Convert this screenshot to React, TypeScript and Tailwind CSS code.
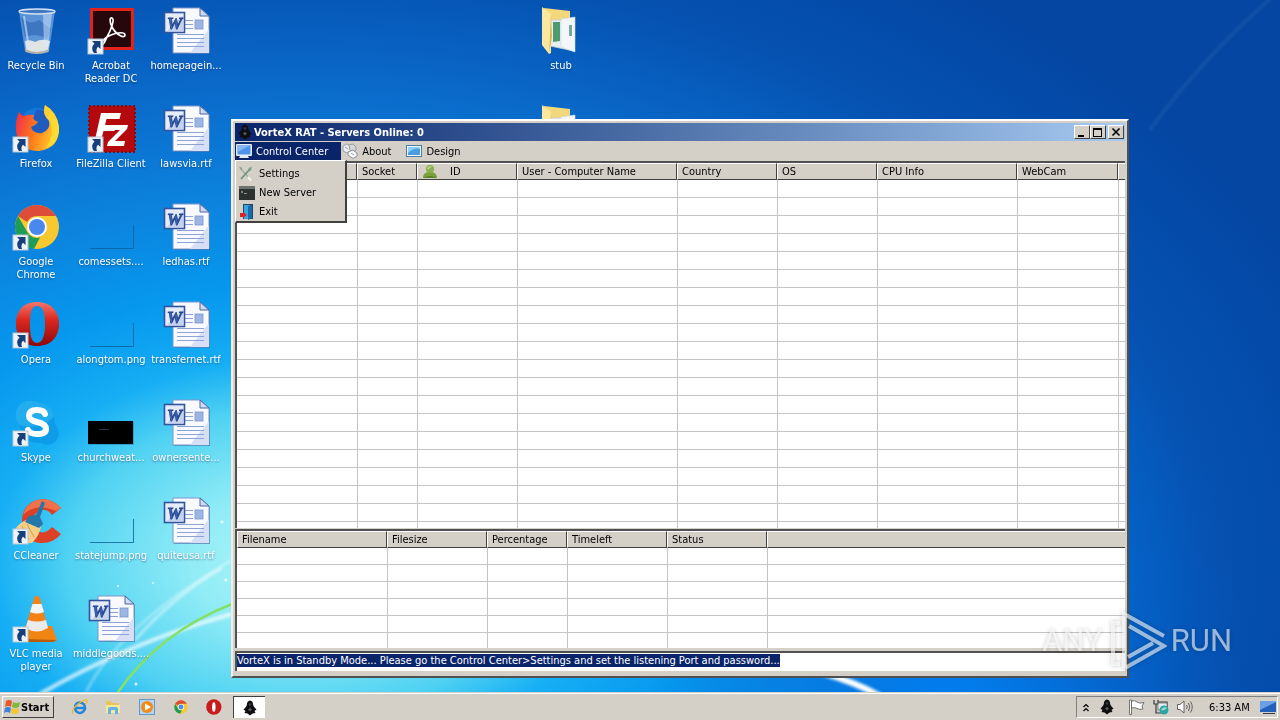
import { useEffect, useRef, type ReactNode } from "react";

const CONNECTION_COLUMNS = [
  { label: "", width: "w-[120px]" },
  { label: "Socket", width: "w-[60px]" },
  { label: "ID", width: "w-[100px]", icon: true },
  { label: "User - Computer Name", width: "w-[160px]" },
  { label: "Country", width: "w-[100px]" },
  { label: "OS", width: "w-[100px]" },
  { label: "CPU Info", width: "w-[140px]" },
  { label: "WebCam", width: "w-[101px]" },
  { label: "", width: "" },
];

const TRANSFER_COLUMNS = [
  { label: "Filename", width: "w-[150px]" },
  { label: "Filesize", width: "w-[100px]" },
  { label: "Percentage", width: "w-[80px]" },
  { label: "Timeleft", width: "w-[100px]" },
  { label: "Status", width: "w-[100px]" },
  { label: "", width: "" },
];

const RAISED = "border border-t-white border-l-white border-r-[#404040] border-b-[#404040] bg-[#d4d0c8]";
const SUNKEN = "border border-t-[#808080] border-l-[#808080] border-r-white border-b-white";

function Shortcut() {
  return (
    <g>
      <rect x="1" y="32" width="15" height="15" fill="#eef3f8" stroke="#b9c6d6" strokeWidth="1" />
      <path d="M5 34H13.500V42L11 39.700Q8.500 42 10 46H7Q3 41 7.500 36.500Z" fill="#163f7c" />
    </g>
  );
}

function Icon48({ children }: { children: ReactNode }) {
  return (
    <svg viewBox="0 0 48 48" className="h-12 w-12 shrink-0 overflow-visible" aria-hidden="true">
      {children}
    </svg>
  );
}

function WordDoc() {
  return (
    <Icon48>
      <path d="M12 2H38L48 10V47H12Z" fill="#1c4f94" opacity=".5" />
      <path d="M11 1H38L47 9V46H11Z" fill="#f8faff" stroke="#7d96c8" strokeWidth="1" />
      <path d="M28 46L47 22V46Z" fill="#d6dff5" />
      <path d="M38 1V9H47Z" fill="#cfdaf0" stroke="#4a66a4" strokeWidth="1" />
      <rect x="33" y="13" width="8" height="9" fill="#9db5e2" stroke="#7b97cf" strokeWidth=".8" />
      <path d="M23 13.500H31M23 17.500H31M23 21.500H31M15 27.500H42M15 31.500H42M15 35.500H42M15 39.500H42" stroke="#8ba2d4" strokeWidth="1.200" />
      <rect x="2.500" y="5.500" width="20" height="20" fill="#e4ebf9" stroke="#33549c" strokeWidth="1.600" />
      <path d="M4 25L21.500 8V24.500H4Z" fill="#b9c9ec" opacity=".7" />
      <text x="12.500" y="21.500" textAnchor="middle" fontFamily="Liberation Serif, serif" fontSize="17" fontWeight="700" fontStyle="italic" fill="#3f62b4" stroke="#24468f" strokeWidth=".8">
        W
      </text>
    </Icon48>
  );
}

function RecycleBin() {
  return (
    <Icon48>
      <path d="M7 4L13 44Q25 49 37 44L43 4Z" fill="#9fc4ee" opacity=".55" />
      <path d="M13 34Q18 32 23 35Q30 31 38 34L36 43Q25 48 14 43Z" fill="#f1ede6" opacity=".9" />
      <path d="M9 10Q18 19 27 13L39 22L35 32Q24 25 13 30Z" fill="#2c63b4" opacity=".6" />
      <path d="M31 8L40 7L36 40H32Z" fill="#d7e9fb" opacity=".5" />
      <path d="M12 9L17 42" stroke="#d6e8fa" strokeWidth="2" opacity=".6" />
      <ellipse cx="25" cy="4.500" rx="18" ry="2.500" fill="#3f79c4" stroke="#d5e4f4" strokeWidth="1.400" />
      <path d="M13 42Q25 48 37 42L36.500 45Q25 49 13.500 45Z" fill="#b5b2ad" />
    </Icon48>
  );
}

function Acrobat() {
  return (
    <Icon48>
      <rect x="3" y="1" width="44" height="42" fill="#e32219" />
      <rect x="6" y="4" width="38" height="36" fill="#26080c" />
      <path d="M16 37C13 37 16 31 24 28C31 25 38 25 38 28C38 32 29 28 25 20C22 14 23 10 25 11C28 12 24 23 20 30C18 34 17 37 16 37Z" fill="none" stroke="#fff" strokeWidth="1.700" />
      <Shortcut />
    </Icon48>
  );
}

function Firefox() {
  return (
    <Icon48>
      <defs>
        <linearGradient id="fox" x1="0" y1=".2" x2="1" y2=".5">
          <stop offset="0" stopColor="#ee2c4c" />
          <stop offset=".5" stopColor="#ff7a1a" />
          <stop offset="1" stopColor="#ffd22e" />
        </linearGradient>
      </defs>
      <circle cx="25" cy="20" r="17" fill="#1479dc" />
      <path d="M24 5Q31 4 36 10L38 25L26 33L18 25Z" fill="#2b3fa4" opacity=".5" />
      <path d="M7 7Q10 11 12 11Q17 9 22 10Q20 14 24 16L26 17Q23 21 19 22Q21 29 30 28Q39 25 37 15Q30 8 33 0Q45 7 47 22Q48 43 27 46Q6 46 4 26Q3 15 7 7Z" fill="url(#fox)" />
      <path d="M33 0Q45 7 47 22Q47 38 34 43Q43 30 38 17Q29 9 33 0Z" fill="#ffdf35" opacity=".8" />
      <Shortcut />
    </Icon48>
  );
}

function FileZilla() {
  return (
    <Icon48>
      <rect x="2" y="1" width="46" height="46" fill="#b50a0d" stroke="#8d0709" strokeWidth="2" strokeDasharray="2 2" />
      <path d="M14 8H34L32.500 14H19.500L18 20H29L27.500 26H16.500L13 39H7Z" fill="#fff" />
      <path d="M26 20H41L40 24L28 36H38L37 41H20L21 37L33 25H25Z" fill="#fff" />
      <Shortcut />
    </Icon48>
  );
}

function ChromeMark() {
  return (
    <>
      <circle cx="25" cy="24" r="22" fill="#f7c92f" />
      <path d="M6 13A22 22 0 0 1 44 13H25A11 11 0 0 0 15 19Z" fill="#dd4b39" />
      <path d="M6 13L15.500 29.500A11 11 0 0 0 28 34.600L22 46A22 22 0 0 1 6 13Z" fill="#1e9d58" />
      <circle cx="25" cy="24" r="10" fill="#fff" />
      <circle cx="25" cy="24" r="8" fill="#4a88ee" />
    </>
  );
}

function OperaMark() {
  return (
    <>
      <defs>
        <linearGradient id="opera" x1="0" y1="0" x2="0" y2="1">
          <stop offset="0" stopColor="#f3776b" />
          <stop offset=".4" stopColor="#dc2820" />
          <stop offset="1" stopColor="#8f0808" />
        </linearGradient>
      </defs>
      <path fillRule="evenodd" d="M25 1C11 1 4 10 4 23S11 45 25 45S47 36 47 23S39 1 25 1ZM25 5C31 5 33 13 33 23S31 42 25 42S18 33 18 23S19 5 25 5Z" fill="url(#opera)" />
    </>
  );
}

function Skype() {
  return (
    <Icon48>
      <path d="M15 2Q23 1 28 4Q43 7 43 25Q50 34 44 42Q38 48 29 44Q11 45 8 29Q1 18 5 9Q9 3 15 2Z" fill="#0d9ce8" />
      <path d="M15 2Q23 1 28 4Q40 6 42 17Q30 32 7 26Q1 18 5 9Q9 3 15 2Z" fill="#22aeee" />
      <path d="M33 15Q32 11 25 11Q17 11 17 17Q17 21 25 23Q34 25 34 30Q34 35 25 35Q18 35 16 31" fill="none" stroke="#fff" strokeWidth="6" strokeLinecap="round" />
      <Shortcut />
    </Icon48>
  );
}

function CCleaner() {
  return (
    <Icon48>
      <path d="M49 11Q39 0 25 3Q10 8 10 24Q11 43 27 46Q41 47 49 37L40 30Q34 37 28 35Q21 33 21 24Q22 15 29 13Q36 12 40 18Z" fill="#dc4025" />
      <path d="M49 11Q39 0 25 3Q14 7 11 18Q24 5 44 14Z" fill="#f0714a" />
      <path d="M14 23Q5 27 1 36L9 46H20Q28 38 29 29Z" fill="#f8ce86" />
      <path d="M10 29L17 43M15 27L22 40" stroke="#d89b4c" strokeWidth="1" />
      <path d="M30 4L33 6L28 20L31 27L27 31L13 25L17 19L24 18Z" fill="#2477a8" />
      <Shortcut />
    </Icon48>
  );
}

function Vlc() {
  return (
    <Icon48>
      <path d="M12 31H40L45 45L41 47H13Z" fill="#f08512" />
      <path d="M12 44L45 45L41 47H13Z" fill="#b95b08" />
      <path d="M22.500 2Q25 0 27.500 2L36 34Q25 41 13 34Z" fill="#f58216" />
      <path d="M20.500 9H29.500L32 17Q25 20 18 17Z" fill="#f4f4f4" />
      <path d="M16 25Q25 28 34 25L36 33Q25 40 13.500 33Z" fill="#ebebeb" />
      <Shortcut />
    </Icon48>
  );
}

function BlankThumb() {
  return (
    <Icon48>
      <path d="M3 45.500H46.500V22" fill="none" stroke="#0e5f98" strokeWidth="1" opacity=".8" />
    </Icon48>
  );
}

function DarkThumb() {
  return (
    <Icon48>
      <rect x="2" y="23" width="45" height="23" fill="#1b7fa8" opacity=".5" />
      <rect x="1" y="22" width="45" height="23" fill="#000" />
      <path d="M12 30.500H22" stroke="#223247" />
    </Icon48>
  );
}

function Folder() {
  return (
    <Icon48>
      <path d="M7 1L33 4V20L13 30Z" fill="#f2d77c" />
      <path d="M13 13H37V44L13 39Z" fill="#e9eef3" stroke="#c2ccd6" strokeWidth=".8" />
      <path d="M16 15H23V34L16 35Z" fill="#4e9b72" />
      <path d="M24 12L38 10V45L24 40Z" fill="#f4f7f9" stroke="#cfd6dc" strokeWidth=".6" />
      <rect x="32" y="18" width="3" height="11" fill="#7aa5a0" />
      <path d="M5 0L14 7V46L12 47L5 38Z" fill="#fbe79d" />
      <path d="M14 7L15 30L12 47Z" fill="#dcb751" />
    </Icon48>
  );
}

function Chrome() {
  return (
    <Icon48>
      <ChromeMark />
      <Shortcut />
    </Icon48>
  );
}

function Opera() {
  return (
    <Icon48>
      <OperaMark />
      <Shortcut />
    </Icon48>
  );
}

const DESKTOP_ICONS = [
  { label: "Recycle Bin", Icon: RecycleBin, place: "col-start-1 row-start-1" },
  { label: "Firefox", Icon: Firefox, place: "col-start-1 row-start-2" },
  { label: "Google Chrome", Icon: Chrome, place: "col-start-1 row-start-3" },
  { label: "Opera", Icon: Opera, place: "col-start-1 row-start-4" },
  { label: "Skype", Icon: Skype, place: "col-start-1 row-start-5" },
  { label: "CCleaner", Icon: CCleaner, place: "col-start-1 row-start-6" },
  { label: "VLC media player", Icon: Vlc, place: "col-start-1 row-start-7" },
  { label: "Acrobat Reader DC", Icon: Acrobat, place: "col-start-2 row-start-1" },
  { label: "FileZilla Client", Icon: FileZilla, place: "col-start-2 row-start-2" },
  { label: "comessets....", Icon: BlankThumb, place: "col-start-2 row-start-3" },
  { label: "alongtom.png", Icon: BlankThumb, place: "col-start-2 row-start-4" },
  { label: "churchweat...", Icon: DarkThumb, place: "col-start-2 row-start-5" },
  { label: "statejump.png", Icon: BlankThumb, place: "col-start-2 row-start-6" },
  { label: "middlegoods....", Icon: WordDoc, place: "col-start-2 row-start-7" },
  { label: "homepagein...", Icon: WordDoc, place: "col-start-3 row-start-1" },
  { label: "lawsvia.rtf", Icon: WordDoc, place: "col-start-3 row-start-2" },
  { label: "ledhas.rtf", Icon: WordDoc, place: "col-start-3 row-start-3" },
  { label: "transfernet.rtf", Icon: WordDoc, place: "col-start-3 row-start-4" },
  { label: "ownersente...", Icon: WordDoc, place: "col-start-3 row-start-5" },
  { label: "quiteusa.rtf", Icon: WordDoc, place: "col-start-3 row-start-6" },
  { label: "stub", Icon: Folder, place: "col-start-8 row-start-1" },
  { label: "", Icon: Folder, place: "col-start-8 row-start-2" },
];

function Wallpaper() {
  return (
    <svg viewBox="0 0 1280 720" preserveAspectRatio="none" className="absolute inset-0 h-full w-full" aria-hidden="true">
      <defs>
        <radialGradient id="sky" gradientUnits="userSpaceOnUse" cx="0" cy="0" r="1" gradientTransform="translate(300 560) scale(1100 720)">
          <stop offset="0" stopColor="#b4f6f8" />
          <stop offset=".1" stopColor="#90ecf6" />
          <stop offset=".21" stopColor="#50d2f2" />
          <stop offset=".28" stopColor="#16aef4" />
          <stop offset=".38" stopColor="#0698ee" />
          <stop offset=".5" stopColor="#0c84de" />
          <stop offset=".66" stopColor="#0a6aca" />
          <stop offset=".82" stopColor="#0552b2" />
          <stop offset="1" stopColor="#0446a2" />
        </radialGradient>
        <radialGradient id="lowlight" gradientUnits="userSpaceOnUse" cx="0" cy="0" r="1" gradientTransform="translate(950 720) scale(300 480)">
          <stop offset="0" stopColor="#0080f4" stopOpacity=".9" />
          <stop offset="1" stopColor="#0068d8" stopOpacity="0" />
        </radialGradient>
        <filter id="glow">
          <feGaussianBlur stdDeviation="1.500" />
        </filter>
      </defs>
      <rect width="1280" height="720" fill="url(#sky)" />
      <rect width="1280" height="720" fill="url(#lowlight)" />
      <g fill="none" stroke="#fff" filter="url(#glow)">
        <path d="M40 694Q130 642 232 614" strokeWidth="4" opacity=".7" />
        <path d="M86 692Q120 625 232 560" strokeWidth="2" opacity=".5" />
        <path d="M135 640Q175 595 222 568" strokeWidth="3" opacity=".5" />
        <path d="M820 672Q855 682 880 696" strokeWidth="6" />
        <path d="M1280 -10Q1200 60 1150 130" strokeWidth="3" opacity=".08" />
      </g>
      <path d="M118 692Q160 632 232 604" fill="none" stroke="#84e068" strokeWidth="2.500" />
      <g fill="#fff" opacity=".8">
        <circle cx="222" cy="522" r="1.500" />
        <circle cx="118" cy="586" r="1" />
        <circle cx="153" cy="583" r="1" />
        <circle cx="226" cy="580" r="1.500" />
        <circle cx="136" cy="684" r="1.500" />
      </g>
    </svg>
  );
}

function Reaper() {
  return (
    <svg viewBox="0 0 16 16" className="h-4 w-4 shrink-0" aria-hidden="true">
      <path d="M8 0.500Q11 1 11 4L11.500 6L13 8L14.500 9.500L12.500 11L13.500 13L10.500 13.500L8 15.500L5.500 13.500L2.500 13L3.500 11L1.500 9.500L3 8L4.500 6L5 4Q5 1 8 0.500Z" fill="#0e0e10" />
      <path d="M6.500 3.500H9.500L9 5.500H7Z" fill="#3c3c44" />
      <path d="M6 9.500L8 8L10 9.500L8 11.500Z" fill="#5a5a62" />
    </svg>
  );
}

function Glyph({ children }: { children: ReactNode }) {
  return (
    <svg viewBox="0 0 16 16" className="h-4 w-4 shrink-0" aria-hidden="true">
      {children}
    </svg>
  );
}

const MonitorGlyph = () => (
  <Glyph>
    <rect x="0" y="1" width="16" height="12" rx="1" fill="#e8eef6" />
    <rect x="1.500" y="2" width="13" height="9.500" fill="#4f93ec" />
    <path d="M1.500 2H14.500L1.500 9Z" fill="#86b8f6" />
    <path d="M4 13H12L13 15H3Z" fill="#e4e9f0" />
  </Glyph>
);

const BadgeGlyph = () => (
  <Glyph>
    <path d="M1 3L5 1L9 3V8L5 10L1 8Z" fill="#eceef0" stroke="#9a9ea3" />
    <path d="M7 2L11 1L14 4V7L11 9L8 7Z" fill="#d5d8dc" stroke="#9a9ea3" />
    <path d="M6 9L11 7L15 10V13L11 15.500L6 12Z" fill="#f8f8f8" stroke="#8d9095" />
    <path d="M3 4L6 6M9 10L12 12" stroke="#9a9ea3" />
  </Glyph>
);

const PictureGlyph = () => (
  <Glyph>
    <rect x=".5" y="2.500" width="15" height="11" fill="#f2f6fa" stroke="#4d7ca4" />
    <rect x="2" y="4" width="12" height="8" fill="#4a9de0" />
    <path d="M2 10Q8 4 14 6V4H2Z" fill="#8fd0f5" />
  </Glyph>
);

const ToolsGlyph = () => (
  <Glyph>
    <path d="M1 2L11 13" stroke="#a9aaa6" strokeWidth="1.500" />
    <path d="M11 3L2 13" stroke="#6d9473" strokeWidth="1.800" />
    <path d="M0 1L3 1.500L2.500 4ZM9 2L13 1L12 5Z" fill="#85a088" />
    <path d="M9 11L12 14.500" stroke="#f4f5f1" strokeWidth="2" />
  </Glyph>
);

const TerminalGlyph = () => (
  <Glyph>
    <rect x="0" y="1" width="16" height="14" fill="#2c302e" />
    <rect x="0" y="1" width="16" height="3" fill="#6c716d" />
    <path d="M2 6L4 7L2 8M5 8.500H8" stroke="#8b918c" fill="none" />
  </Glyph>
);

const ExitGlyph = () => (
  <Glyph>
    <rect x="4" y="0" width="10" height="15" fill="#24455f" />
    <path d="M5 1H11L9 15H5Z" fill="#39a4e4" />
    <path d="M9 2L13 1V14L9 16Z" fill="#176ba6" />
    <path d="M1 9H4V8L8 11L4 14V13H1Z" fill="#d92326" />
  </Glyph>
);

const UserGlyph = () => (
  <Glyph>
    <path d="M1 14Q1 9 6 8H10Q15 9 15 14Z" fill="#7ba03c" />
    <circle cx="8" cy="5" r="4" fill="#8cb04c" />
    <path d="M5 4Q7 1 10 3Q7 4 6 6Z" fill="#b8d485" />
    <path d="M1 14Q8 10 15 14Z" fill="#5d8228" />
  </Glyph>
);

type Column = { label: string; width: string; icon?: boolean };

function ListView({ title, columns, rows, rowHeight }: { title: string; columns: Column[]; rows: number; rowHeight: string }) {
  return (
    <table aria-label={title} className="w-full table-fixed border-separate border-spacing-0">
      <thead>
        <tr className="h-[17px]">
          {columns.map((col, i) => (
            <th
              key={i}
              scope="col"
              className={`${col.width} h-[17px] overflow-hidden border-t border-b border-l border-t-white border-l-white border-b-[#404040] bg-[#d4d0c8] p-0 text-left leading-[15px] font-normal whitespace-nowrap ${
                i < columns.length - 1 ? "border-r border-r-[#404040]" : ""
              }`}
            >
              <span className="flex h-[15px] items-center gap-3 pl-1">
                {col.icon ? <UserGlyph /> : null}
                {col.label}
              </span>
            </th>
          ))}
        </tr>
      </thead>
      <tbody>
        {Array.from({ length: rows }, (_, r) => (
          <tr key={r}>
            {columns.map((_, c) => (
              <td key={c} className={`${rowHeight} border-b border-[#c4c4c4] p-0 ${c > 0 ? "border-l" : ""}`} />
            ))}
          </tr>
        ))}
      </tbody>
    </table>
  );
}

function MenuBar() {
  return (
    <nav className="relative z-10 flex h-5 items-stretch pt-px">
      <button type="button" className="flex h-[18px] items-center gap-1 bg-[#0a246a] pr-[13px] pl-px text-white">
        <MonitorGlyph />
        Control Center
      </button>
      <button type="button" className="flex h-[18px] items-center gap-1 pr-[14px] pl-px">
        <BadgeGlyph />
        About
      </button>
      <button type="button" className="flex h-[18px] items-center gap-1 pr-[14px] pl-px">
        <PictureGlyph />
        Design
      </button>
      <div className="absolute top-[19px] left-0 flex w-28 flex-col border-t border-r-2 border-b-2 border-l border-t-white border-l-white border-r-[#404040] border-b-[#404040] bg-[#d4d0c8] pt-[3px] pl-[3px]">
        <button type="button" className="flex h-[19px] items-center gap-1 text-left">
          <ToolsGlyph />
          Settings
        </button>
        <button type="button" className="flex h-[19px] items-center gap-1 text-left">
          <TerminalGlyph />
          New Server
        </button>
        <button type="button" className="flex h-[19px] items-center gap-1 text-left">
          <ExitGlyph />
          Exit
        </button>
      </div>
    </nav>
  );
}

function AppWindow() {
  const statusRef = useRef<HTMLInputElement>(null);

  useEffect(() => {
    statusRef.current?.focus();
    statusRef.current?.select();
  }, []);

  return (
    <section className="absolute top-[119px] right-[151px] bottom-[14px] left-[231px] flex flex-col border-2 border-t-white border-r-[#505050] border-b-[#505050] border-l-[#f0eeea] bg-[#d4d0c8] p-[2px]">
      <header className="flex h-[18px] shrink-0 items-center bg-linear-to-r from-[#0a246a] to-[#a6caf0] pr-px pl-[2px] text-white">
        <Reaper />
        <h1 className="ml-px flex-1 font-bold">VorteX RAT - Servers Online: 0</h1>
        <button type="button" aria-label="Minimize" className={`${RAISED} flex h-[14px] w-4 items-center justify-center`}>
          <svg viewBox="0 0 12 12" className="h-3 w-3">
            <path d="M2 9H8V11H2Z" fill="#000" />
          </svg>
        </button>
        <button type="button" aria-label="Maximize" className={`${RAISED} flex h-[14px] w-4 items-center justify-center`}>
          <svg viewBox="0 0 12 12" className="h-3 w-3">
            <path fillRule="evenodd" d="M1 2H10V11H1ZM2 4V10H9V4Z" fill="#000" />
          </svg>
        </button>
        <button type="button" aria-label="Close" className={`${RAISED} ml-[2px] flex h-[14px] w-4 items-center justify-center`}>
          <svg viewBox="0 0 12 12" className="h-3 w-3">
            <path d="M2.500 2.500L9.500 9.500M9.500 2.500L2.500 9.500" stroke="#000" strokeWidth="1.600" />
          </svg>
        </button>
      </header>
      <MenuBar />
      <div className="min-h-0 flex-1 overflow-hidden border-t-2 border-l-2 border-[#505050] bg-white">
        <ListView title="Connections" columns={CONNECTION_COLUMNS} rows={20} rowHeight="h-[18px]" />
      </div>
      <div className="mt-px h-[119px] shrink-0 overflow-hidden border-t-2 border-l-2 border-[#505050] bg-white">
        <ListView title="Transfers" columns={TRANSFER_COLUMNS} rows={6} rowHeight="h-[17px]" />
      </div>
      <input
        ref={statusRef}
        aria-label="Status"
        readOnly
        defaultValue="VorteX is in Standby Mode... Please go the Control Center>Settings and set the listening Port and password..."
        className="mt-[3px] mb-[3px] h-5 shrink-0 border-t-2 border-l-2 border-[#505050] bg-white pb-[3px] leading-[13px] outline-none selection:bg-[#0a246a] selection:text-white"
      />
    </section>
  );
}

function Watermark() {
  return (
    <div className="pointer-events-none absolute top-[610px] right-12 flex h-[60px] items-center font-['Roboto',sans-serif] text-[31px] text-white/60 drop-shadow-[0_0_2px_rgba(0,0,0,0.35)]">
      <span>ANY</span>
      <svg viewBox="0 0 60 60" className="mx-1 h-[60px] w-[60px]" fill="none" stroke="currentColor" strokeWidth="4" aria-hidden="true">
        <path d="M13 13H6V54H13" />
        <path d="M17 58V4L57 26M22 16L57 36L18 58M21 47L46 33" />
      </svg>
      <span>RUN</span>
    </div>
  );
}

function Taskbar() {
  return (
    <footer className="relative flex h-7 shrink-0 items-center border-t border-[#d4d0c8] bg-[#d4d0c8] px-[2px] shadow-[inset_0_1px_0_#fff]">
      <button type="button" className={`${RAISED} mt-px flex h-[22px] w-[52px] items-center gap-px pl-px font-bold`}>
        <Glyph>
          <path d="M2 2Q5 0 8 2L7 8Q4 6 1 8Z" fill="#e8582c" />
          <path d="M9 3Q12 5 16 3L15 8Q11 10 8 8Z" fill="#7dba3c" />
          <path d="M1 9Q4 7 7 9L6 14Q3 12 0 14Z" fill="#3b83dc" />
          <path d="M8 9Q11 11 15 9L14 14Q10 16 7 14Z" fill="#f5c52e" />
        </Glyph>
        Start
      </button>
      <div className="ml-[9px] flex w-[168px] items-center">
        <button type="button" aria-label="Internet Explorer" className="flex flex-1 justify-center">
          <Glyph>
            <path d="M13 10Q11 14 7.500 14Q3 13 3 8.500Q3 4 8 3.500Q13 4 13 9H4" fill="none" stroke="#2385dc" strokeWidth="2.500" />
            <path d="M1 15Q-1 11 5 6Q12 0 15 1Q16 3 13 5" fill="none" stroke="#efb92c" strokeWidth="1.300" />
          </Glyph>
        </button>
        <button type="button" aria-label="Explorer" className="flex flex-1 justify-center">
          <Glyph>
            <path d="M1 2H6L7 4H14V13H1Z" fill="#e8c65c" />
            <path d="M1 6H15V14H1Z" fill="#fbe798" />
            <path d="M3 15V10Q3 8 5 8H11Q13 8 13 10V15H10V11H6V15Z" fill="#65b3e4" />
          </Glyph>
        </button>
        <button type="button" aria-label="Media Player" className="flex flex-1 justify-center">
          <Glyph>
            <rect x=".5" y=".5" width="15" height="15" fill="#b4d6f2" stroke="#5d98ce" />
            <circle cx="8" cy="8" r="6" fill="#f38a16" />
            <path d="M6 4.500L12 8L6 11.500Z" fill="#fff" />
          </Glyph>
        </button>
        <button type="button" aria-label="Chrome" className="flex flex-1 justify-center">
          <svg viewBox="2 1 46 46" className="h-[14px] w-[14px]">
            <ChromeMark />
          </svg>
        </button>
        <button type="button" aria-label="Opera" className="flex flex-1 justify-center">
          <svg viewBox="3 0 45 46" className="h-4 w-4">
            <circle cx="25" cy="23" r="22" fill="#c91a1c" />
            <ellipse cx="25" cy="23" rx="5" ry="14" fill="#fff" />
          </svg>
        </button>
      </div>
      <button type="button" aria-label="VorteX RAT" className="mt-px ml-[2px] flex h-[22px] w-8 items-center justify-center border-t border-l border-[#404040] bg-white">
        <Reaper />
      </button>
      <div className={`${SUNKEN} mt-px ml-auto flex h-[22px] w-[202px] items-center`}>
        <svg viewBox="0 0 6 9" className="ml-[6px] h-[9px] w-[6px]" fill="none" stroke="#000" strokeWidth="1.200">
          <path d="M.5 4L3 1.500L5.500 4M.5 8L3 5.500L5.500 8" />
        </svg>
        <span className="ml-[10px] flex">
          <Reaper />
        </span>
        <span className="ml-[14px] flex gap-2">
          <Glyph>
            <path d="M.5 1V15.500H2.500V1Z" fill="#fff" stroke="#555" strokeWidth=".8" />
            <path d="M2.500 2Q6 1 8 3Q10 5 15 3.500L13 7L14 10Q11 11 8 9.500Q6 8 2.500 9Z" fill="#fff" stroke="#555" strokeWidth=".8" />
          </Glyph>
          <Glyph>
            <path d="M1 1V5H3V14H8M5 1V5H1M5 3H14V12" fill="none" stroke="#3b3b3b" strokeWidth="1.200" />
            <rect x="5" y="4" width="9" height="7" fill="#e8eef0" stroke="#666" strokeWidth=".8" />
            <circle cx="11" cy="11" r="4.500" fill="#2ba5a4" />
            <path d="M8 11Q10 7 14 9Q11 12 8 11Z" fill="#9be0cf" />
          </Glyph>
          <Glyph>
            <path d="M.5 5.500H3L7 2V14L3 10.500H.5Z" fill="#fff" stroke="#555" strokeWidth=".9" />
            <path d="M9.500 6Q11 8 9.500 10M11.500 4Q14 8 11.500 12M13.500 2.500Q17 8 13.500 13.500" fill="none" stroke="#555" strokeWidth=".9" />
          </Glyph>
        </span>
        <time className="ml-4 flex-1 whitespace-nowrap">6:33 AM</time>
        <button type="button" aria-label="Show desktop" className="mr-px flex">
          <Glyph>
            <path d="M0 2H16V13H0Z" fill="#2360bc" />
            <path d="M0 2H16V3L0 11Z" fill="#6ca0e6" />
            <path d="M3 14H15V15H3Z" fill="#333c50" />
          </Glyph>
        </button>
      </div>
    </footer>
  );
}

export default function App() {
  return (
    <div className="relative flex h-screen flex-col overflow-hidden font-['DejaVu_Sans_Condensed','Tahoma','DejaVu_Sans',sans-serif] text-[11px] leading-[13px] text-black">
      <Wallpaper />
      <main className="relative min-h-0 flex-1">
        <ul className="grid auto-cols-[75px] grid-rows-[repeat(7,98px)]">
          {DESKTOP_ICONS.map(({ label, Icon, place }, i) => (
            <li key={i} className={`${place} flex w-[72px] flex-col items-center pt-[7px]`}>
              <Icon />
              <span className="mt-1 text-center text-white [text-shadow:0_1px_2px_rgba(0,30,80,0.5)]">{label}</span>
            </li>
          ))}
        </ul>
        <AppWindow />
        <Watermark />
      </main>
      <Taskbar />
    </div>
  );
}
